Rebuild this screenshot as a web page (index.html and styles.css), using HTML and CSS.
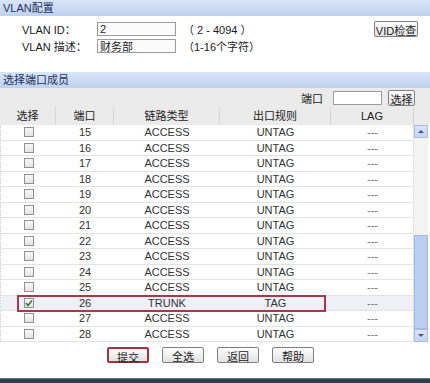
FILE: index.html
```html
<!DOCTYPE html>
<html lang="zh-CN">
<head>
  <meta charset="UTF-8" />
  <title>VLAN配置</title>
  <link rel="stylesheet" href="styles.css">
</head>
<body>
  <div class="page">
    <div class="bar-title">VLAN配置</div>
    <div class="vlan-form">
      <div class="form-row">
        <span class="form-label">VLAN ID：</span>
        <input class="field" type="text" value="2">
        <span class="hint">（ 2 - 4094 ）</span>
        <button class="btn btn-check">VID检查</button>
      </div>
      <div class="form-row">
        <span class="form-label">VLAN 描述：</span>
        <input class="field" type="text" value="财务部">
        <span class="hint">（1-16个字符）</span>
      </div>
    </div>

    <div class="bar-title">选择端口成员</div>
    <div class="port-tools">
      <span class="tools-label">端口</span>
      <input class="field field-port" type="text">
      <button class="btn btn-pick">选择</button>
    </div>
    <div class="grid-head">
      <div>选择</div>
      <div>端口</div>
      <div>链路类型</div>
      <div>出口规则</div>
      <div>LAG</div>
      <div></div>
    </div>

    <div class="port-list">
      <div class="rows">
        <div class="row"><span class="box"></span><span>15</span><span>ACCESS</span><span>UNTAG</span><span class="lag">---</span></div>
        <div class="row"><span class="box"></span><span>16</span><span>ACCESS</span><span>UNTAG</span><span class="lag">---</span></div>
        <div class="row"><span class="box"></span><span>17</span><span>ACCESS</span><span>UNTAG</span><span class="lag">---</span></div>
        <div class="row"><span class="box"></span><span>18</span><span>ACCESS</span><span>UNTAG</span><span class="lag">---</span></div>
        <div class="row"><span class="box"></span><span>19</span><span>ACCESS</span><span>UNTAG</span><span class="lag">---</span></div>
        <div class="row"><span class="box"></span><span>20</span><span>ACCESS</span><span>UNTAG</span><span class="lag">---</span></div>
        <div class="row"><span class="box"></span><span>21</span><span>ACCESS</span><span>UNTAG</span><span class="lag">---</span></div>
        <div class="row"><span class="box"></span><span>22</span><span>ACCESS</span><span>UNTAG</span><span class="lag">---</span></div>
        <div class="row"><span class="box"></span><span>23</span><span>ACCESS</span><span>UNTAG</span><span class="lag">---</span></div>
        <div class="row"><span class="box"></span><span>24</span><span>ACCESS</span><span>UNTAG</span><span class="lag">---</span></div>
        <div class="row"><span class="box"></span><span>25</span><span>ACCESS</span><span>UNTAG</span><span class="lag">---</span></div>
        <div class="row selected">
          <span class="box checked">
            <svg width="8" height="8" viewBox="0 0 8 8"><path d="M1 4 L3 6.5 L7 1.5" fill="none" stroke="#2f7a34" stroke-width="1.6"/></svg>
          </span>
          <span>26</span><span>TRUNK</span><span>TAG</span><span class="lag">---</span>
        </div>
        <div class="row"><span class="box"></span><span>27</span><span>ACCESS</span><span>UNTAG</span><span class="lag">---</span></div>
        <div class="row"><span class="box"></span><span>28</span><span>ACCESS</span><span>UNTAG</span><span class="lag">---</span></div>
      </div>
      <div class="scrollbar">
        <div class="sb-btn sb-up"></div>
        <div class="sb-track"><div class="sb-thumb"></div></div>
        <div class="sb-btn sb-down"></div>
      </div>
    </div>

    <div class="actions">
      <button class="btn btn-act btn-submit">提交</button>
      <button class="btn btn-act">全选</button>
      <button class="btn btn-act">返回</button>
      <button class="btn btn-act">帮助</button>
    </div>
    <div class="footer-line"></div>
  </div>
</body>
</html>
```

FILE: styles.css
```css
body {
  margin: 0;
  background-color: #ffffff;
  font-family: "Liberation Sans", "Noto Sans CJK SC", sans-serif;
  font-size: 11px;
  color: #222222;
}

.page {
  width: 430px;
  height: 383px;
  display: flex;
  flex-direction: column;
  overflow: hidden;
}

.bar-title {
  height: 16px;
  line-height: 16px;
  padding-left: 3px;
  background: linear-gradient(#d9e5f8, #bfd1ef);
  color: #22315a;
  flex-shrink: 0;
}

/* VLAN form */
.vlan-form {
  height: 56px;
  padding-top: 4px;
  box-sizing: border-box;
  flex-shrink: 0;
}

.form-row {
  display: flex;
  align-items: center;
  height: 17px;
  padding: 0 12px 0 22px;
}

.form-label {
  width: 75px;
}

.field {
  width: 79px;
  height: 14px;
  margin: 0;
  padding: 0 2px;
  box-sizing: border-box;
  border: 1px solid #9c9c9c;
  background-color: #fbfbfb;
  font-family: inherit;
  font-size: 11px;
  color: #222222;
}

.hint {
  margin-left: 7px;
}

.btn {
  margin: 0;
  padding: 0;
  height: 16px;
  box-sizing: border-box;
  border: 1px solid #7f7f7f;
  border-radius: 2px;
  background: linear-gradient(#fdfdfd, #e2e2e2);
  font-family: inherit;
  font-size: 11px;
  color: #222222;
  cursor: pointer;
}

.btn-check {
  margin-left: auto;
  width: 44px;
}

/* port selection */
.port-tools {
  height: 19px;
  display: flex;
  align-items: center;
  justify-content: flex-end;
  padding-right: 15px;
  background-color: #ebebeb;
  flex-shrink: 0;
}

.tools-label {
  margin-right: 10px;
}

.field-port {
  width: 49px;
  margin-right: 6px;
  background-color: #ffffff;
}

.btn-pick {
  width: 27px;
}

.grid-head,
.row {
  display: grid;
  grid-template-columns: 55px 58px 106px 111px 83px;
  align-items: center;
  justify-items: center;
}

.grid-head {
  grid-template-columns: 55px 58px 106px 111px 83px 1fr;
  height: 18px;
  background-color: #ebebeb;
  flex-shrink: 0;
}

.grid-head div {
  width: 100%;
  height: 100%;
  line-height: 18px;
  text-align: center;
  box-sizing: border-box;
}

.grid-head div + div {
  border-left: 1px solid #d6d6d6;
}

.port-list {
  height: 217px;
  display: flex;
  flex-shrink: 0;
}

.rows {
  width: 413px;
  border-left: 1px dotted #cccccc;
  box-sizing: border-box;
}

.row {
  position: relative;
  height: 15.5px;
  border-bottom: 1px solid #e3e3e3;
  box-sizing: border-box;
  color: #333333;
}

.row .lag {
  color: #777777;
}

.row.selected {
  background-color: #eef0f5;
}

.row.selected::after {
  content: "";
  position: absolute;
  left: 16px;
  width: 309px;
  top: -1px;
  bottom: -2px;
  border: 2px solid #b2344a;
  box-sizing: border-box;
}

.box {
  width: 10px;
  height: 10px;
  box-sizing: border-box;
  border: 1px solid #919191;
  background: linear-gradient(#f8f8f8, #e4e4e4);
  display: flex;
  align-items: center;
  justify-content: center;
}

/* scrollbar */
.scrollbar {
  width: 15px;
  display: flex;
  flex-direction: column;
  background-color: #f3f3f3;
  border-left: 1px solid #e2e2e2;
  box-sizing: border-box;
}

.sb-btn {
  height: 13px;
  background: linear-gradient(#dbe5f8, #c3d3f2);
  border: 1px solid #a8bce5;
  box-sizing: border-box;
  display: flex;
  align-items: center;
  justify-content: center;
}

.sb-up::before,
.sb-down::before {
  content: "";
  border-left: 3px solid transparent;
  border-right: 3px solid transparent;
}

.sb-up::before {
  border-bottom: 3px solid #4a5670;
}

.sb-down::before {
  border-top: 3px solid #4a5670;
}

.sb-track {
  flex: 1;
  display: flex;
  flex-direction: column;
  justify-content: flex-end;
}

.sb-thumb {
  height: 92px;
  background-color: #bccdf2;
  border: 1px solid #a4b8e3;
}

/* bottom buttons */
.actions {
  display: flex;
  gap: 13px;
  padding-left: 107px;
  margin-top: 5px;
}

.btn-act {
  width: 42px;
}

.btn-submit {
  border: 2px solid #ad2f42;
}

.footer-line {
  margin-top: auto;
  height: 4px;
  background-color: #2b4350;
  border-top: 1px solid #5d7480;
}
```
